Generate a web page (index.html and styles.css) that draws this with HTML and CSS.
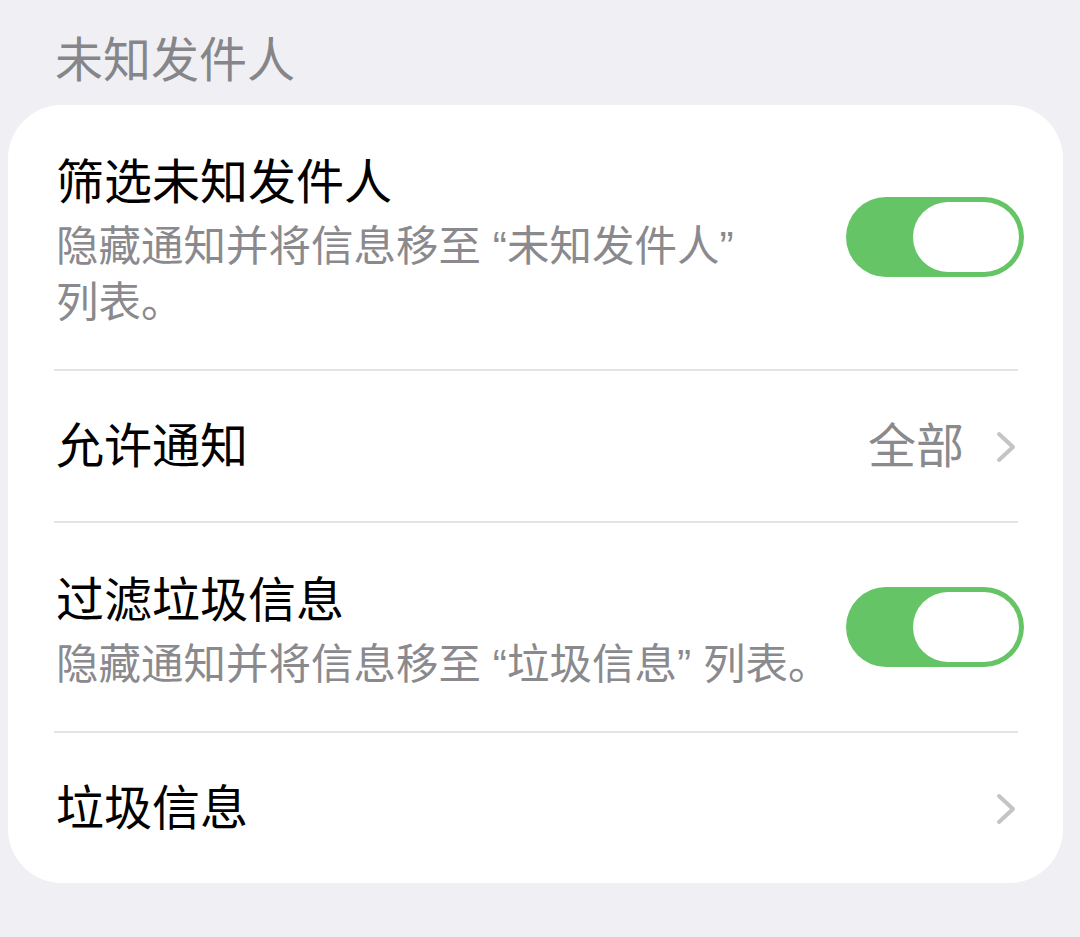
FILE: index.html
```html
<!DOCTYPE html>
<html lang="zh-CN">
<head>
<meta charset="utf-8">
<title>未知发件人</title>
<link rel="stylesheet" href="styles.css">
</head>
<body>
<div class="page">
  <h2 class="section-title">未知发件人</h2>
  <div class="card">
    <div class="row row-tall">
      <div class="row-text">
        <div class="row-title">筛选未知发件人</div>
        <div class="row-sub">隐藏通知并将信息移至 “未知发件人”<br>列表。</div>
      </div>
      <div class="switch on"><span class="knob"></span></div>
    </div>
    <div class="sep"></div>
    <div class="row">
      <div class="row-title">允许通知</div>
      <div class="row-right">
        <span class="row-value">全部</span>
        <svg class="chevron" viewBox="0 0 20 32" width="20" height="32"><path d="M3 3 L17 16 L3 29" fill="none" stroke="#c4c4c7" stroke-width="4" stroke-linecap="round" stroke-linejoin="round"/></svg>
      </div>
    </div>
    <div class="sep"></div>
    <div class="row row-tall">
      <div class="row-text">
        <div class="row-title">过滤垃圾信息</div>
        <div class="row-sub">隐藏通知并将信息移至 “垃圾信息” 列表。</div>
      </div>
      <div class="switch on"><span class="knob"></span></div>
    </div>
    <div class="sep"></div>
    <div class="row">
      <div class="row-title">垃圾信息</div>
      <div class="row-right">
        <svg class="chevron" viewBox="0 0 20 32" width="20" height="32"><path d="M3 3 L17 16 L3 29" fill="none" stroke="#c4c4c7" stroke-width="4" stroke-linecap="round" stroke-linejoin="round"/></svg>
      </div>
    </div>
  </div>
</div>
</body>
</html>
```

FILE: styles.css
```css
html, body {
  margin: 0;
  padding: 0;
  background: #f0f0f4;
}
body {
  font-family: "Liberation Sans", "Noto Sans CJK SC", sans-serif;
  width: 1080px;
  height: 937px;
  overflow: hidden;
}
.page {
  padding: 33px 17px 0 8px;
}
.section-title {
  margin: 0 0 16px 0;
  padding-left: 47px;
  font-size: 48px;
  line-height: 56px;
  font-weight: 400;
  color: #86868a;
}
.card {
  background: #ffffff;
  border-radius: 54px;
}
.row {
  display: flex;
  align-items: center;
  justify-content: space-between;
  padding: 48px 39px 46px 48px;
}
.row-tall {
  padding: 50px 39px 38px 48px;
}
.row-text {
  display: flex;
  flex-direction: column;
  gap: 8px;
}
.row-title {
  font-size: 48px;
  line-height: 56px;
  color: #000000;
}
.row-sub {
  font-size: 42.5px;
  line-height: 56px;
  color: #8a8a8e;
}
.row-right {
  display: flex;
  align-items: center;
  gap: 32px;
  margin-right: 8px;
}
.row-value {
  font-size: 48px;
  line-height: 56px;
  color: #8a8a8e;
}
.chevron {
  display: block;
}
.sep {
  height: 2px;
  background: #e4e4e7;
  margin: 0 45px 0 46px;
}
.switch {
  width: 178px;
  height: 80px;
  margin-top: -12px;
  border-radius: 40px;
  background: #65c466;
  padding: 5px;
  box-sizing: border-box;
  display: flex;
  justify-content: flex-end;
  flex-shrink: 0;
}
.knob {
  width: 106px;
  height: 70px;
  border-radius: 35px;
  background: #ffffff;
}
```
